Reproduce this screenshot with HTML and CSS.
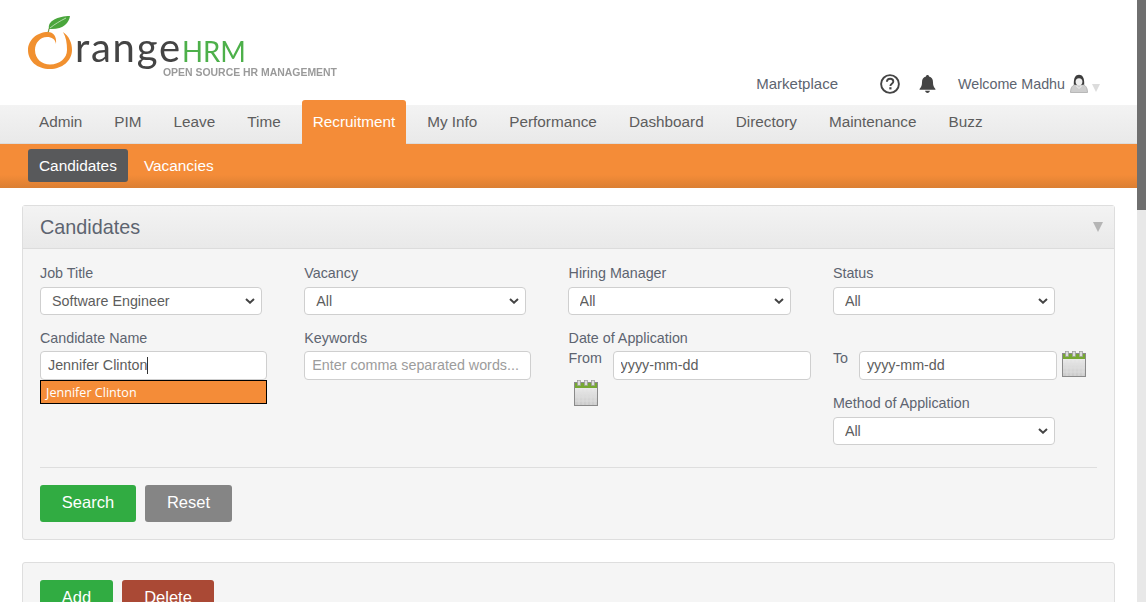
FILE: index.html
```html
<!DOCTYPE html>
<html lang="en">
<head>
<meta charset="utf-8">
<title>OrangeHRM</title>
<link rel="stylesheet" href="styles.css">
</head>
<body>
<div class="page">
  <header class="top">
    <svg class="logo" width="320" height="70" viewBox="0 0 320 70" aria-label="OrangeHRM">
      <path d="M21 14 C19 6 30 1 42 1 C41 8 35 15 21 14Z" fill="#4aa63c"/>
      <path d="M22 13 C27 9 32 6 38 3" stroke="#cfe8c6" stroke-width=".8" fill="none"/>
      <path d="M21 13.500 C21 15 20.500 17 19.500 18" stroke="#6c8a3a" stroke-width="1.100" fill="none"/>
      <path d="M35 17 C41 21 44 28 44 35 C44 46 34 54 22 54 C9 54 0 46 0 35 C0 25 9 17 20 17 C25 17 29 21 28 29 C27 24 24 22 19 22 C12 22 7 28 7 35 C7 44 14 49.500 22 49.500 C32 49.500 39 43 39 35 C39 28 38 22 35 17Z" fill="#f1902f"/>
      <text class="logo-word" x="47" y="47" textLength="105" lengthAdjust="spacing">range</text>
      <text class="logo-hrm" x="154" y="47" textLength="64" lengthAdjust="spacingAndGlyphs">HRM</text>
      <text class="logo-tag" x="135" y="61" textLength="174" lengthAdjust="spacingAndGlyphs">OPEN SOURCE HR MANAGEMENT</text>
    </svg>
    <div class="top-tools">
      <a class="market">Marketplace</a>
      <svg class="help" width="20" height="20" viewBox="0 0 20 20">
        <circle cx="10" cy="10" r="8.900" fill="none" stroke="#444" stroke-width="1.900"/>
        <path d="M6.900 7.700 C7 5.700 8.400 4.800 10.100 4.800 C12 4.800 13.300 5.900 13.300 7.500 C13.300 9.600 10.400 9.900 10.400 12" fill="none" stroke="#444" stroke-width="1.900"/>
        <rect x="9.300" y="13.200" width="2.200" height="2.200" fill="#444"/>
      </svg>
      <svg class="bell" width="17" height="20" viewBox="0 0 18 20">
        <path d="M9 0.500 C10 0.500 10.600 1.200 10.600 2.100 C13.500 2.800 14.800 5 14.800 8 C14.800 11.500 15.500 13.500 17.400 15.200 L17.400 16.200 L0.600 16.200 L0.600 15.200 C2.500 13.500 3.200 11.500 3.200 8 C3.200 5 4.500 2.800 7.400 2.100 C7.400 1.200 8 .5 9 .5Z" fill="#444"/>
        <path d="M6.500 17.200 H11.500 C11.300 18.700 10.300 19.500 9 19.500 C7.700 19.500 6.700 18.700 6.500 17.200Z" fill="#444"/>
      </svg>
      <span class="welcome">Welcome Madhu</span>
      <svg class="avatar" width="18" height="20" viewBox="0 0 18 20">
        <path d="M.5 18.500 C.5 13 3 11 6 10 L12 10 C15 11 17.500 13 17.500 18.500Z" fill="#cdcdcd" stroke="#a4a4a4" stroke-width=".7"/>
        <path d="M3.800 10.500 C3.500 4 5.500 .8 9 .8 C12.500 .8 14.500 4 14.200 10.500 L11.500 11 L6.500 11Z" fill="#3d3d3d"/>
        <ellipse cx="9" cy="7.800" rx="3.400" ry="3.600" fill="#efefef"/>
        <path d="M6.500 12 L9 14.500 L11.500 12" stroke="#f4f4f4" stroke-width="1" fill="none"/>
      </svg>
      <span class="caret-down top-caret"></span>
    </div>
  </header>

  <nav class="main-nav">
    <a class="nav-item">Admin</a>
    <a class="nav-item">PIM</a>
    <a class="nav-item">Leave</a>
    <a class="nav-item">Time</a>
    <a class="nav-item active">Recruitment</a>
    <a class="nav-item">My Info</a>
    <a class="nav-item">Performance</a>
    <a class="nav-item">Dashboard</a>
    <a class="nav-item">Directory</a>
    <a class="nav-item">Maintenance</a>
    <a class="nav-item">Buzz</a>
  </nav>
  <nav class="sub-nav">
    <a class="sub-item current">Candidates</a>
    <a class="sub-item">Vacancies</a>
  </nav>

  <main class="content">
    <section class="panel">
      <div class="panel-head">
        <h1>Candidates</h1>
        <span class="caret-down head-caret"></span>
      </div>
      <form class="panel-body">
        <div class="grid row-one">
          <div class="field">
            <label>Job Title</label>
            <select class="sel"><option>Software Engineer</option></select>
          </div>
          <div class="field">
            <label>Vacancy</label>
            <select class="sel"><option>All</option></select>
          </div>
          <div class="field">
            <label>Hiring Manager</label>
            <select class="sel nudge"><option>All</option></select>
          </div>
          <div class="field">
            <label>Status</label>
            <select class="sel"><option>All</option></select>
          </div>
        </div>
        <div class="grid row-two">
          <div class="field">
            <label class="low">Candidate Name</label>
            <div class="name-wrap">
              <input class="txt" value="Jennifer Clinton">
              <span class="text-caret"></span>
              <div class="suggest">Jennifer Clinton</div>
            </div>
          </div>
          <div class="field">
            <label class="low">Keywords</label>
            <input class="txt" placeholder="Enter comma separated words...">
          </div>
          <div class="field">
            <label class="low">Date of Application</label>
            <div class="date-row wrap">
              <span class="mini">From</span>
              <input class="txt date" value="yyyy-mm-dd">
              <svg class="cal" width="24" height="26" viewBox="0 0 24 26"><use href="#cal"/></svg>
            </div>
          </div>
          <div class="field to-col">
            <div class="date-row">
              <span class="mini to">To</span>
              <input class="txt date" value="yyyy-mm-dd">
              <svg class="cal" width="24" height="26" viewBox="0 0 24 26"><use href="#cal"/></svg>
            </div>
            <label class="method">Method of Application</label>
            <select class="sel"><option>All</option></select>
          </div>
        </div>
        <hr class="divider">
        <div class="actions">
          <button type="button" class="btn green search">Search</button>
          <button type="button" class="btn grey reset">Reset</button>
        </div>
      </form>
    </section>

    <section class="panel second">
      <div class="actions">
        <button type="button" class="btn green add">Add</button>
        <button type="button" class="btn red delete">Delete</button>
      </div>
    </section>
  </main>
</div>
<div class="scrollbar"><div class="thumb"></div></div>

<svg class="defs" width="0" height="0">
  <defs>
    <linearGradient id="calg" x1="0" y1="0" x2="0" y2="1">
      <stop offset="0" stop-color="#f4f4f4"/>
      <stop offset="1" stop-color="#c9c9c9"/>
    </linearGradient>
    <g id="cal">
      <rect x=".5" y="2.500" width="23" height="23" fill="url(#calg)" stroke="#8a8a8a"/>
      <rect x="1" y="3" width="22" height="5" fill="#76a832"/>
      <path d="M5 9V25M9 9V25M13 9V25M17 9V25M21 9V25M1 13H23M1 17H23M1 21H23" stroke="#e0e0e0" stroke-width=".7"/>
      <rect x="3.500" y="0.500" width="3" height="5" fill="#ddd" stroke="#999" stroke-width=".7"/>
      <rect x="10.500" y="0.500" width="3" height="5" fill="#ddd" stroke="#999" stroke-width=".7"/>
      <rect x="17.500" y="0.500" width="3" height="5" fill="#ddd" stroke="#999" stroke-width=".7"/>
    </g>
  </defs>
</svg>
</body>
</html>
```
FILE: styles.css
```css
* { box-sizing: border-box; }
html, body { margin: 0; height: 602px; overflow: hidden; }
body {
  display: flex;
  width: 1146px;
  background: #fff;
  font-family: "Liberation Sans", Arial, sans-serif;
  font-size: 14.300px;
  color: #5d5d5d;
}
.page { width: 1137px; height: 602px; overflow: hidden; flex: none; }
.scrollbar { width: 9px; background: #e8e8e8; flex: none; }
.thumb { height: 210px; background: #6f6f6f; }
.defs { position: absolute; }

.top { height: 105px; display: flex; justify-content: space-between; position: relative; }
.logo { margin: 15px 0 0 28px; filter: blur(.35px); }
.logo-word { font-family: Lato, sans-serif; font-weight: 400; font-size: 40px; fill: #444; }
.logo-hrm { font-family: Lato, sans-serif; font-weight: 400; font-size: 28px; fill: #4db04a; }
.logo-tag { font-family: "Liberation Sans", sans-serif; font-weight: 700; font-size: 11px; fill: #9a9a9a; }
.top-tools { display: flex; align-items: center; height: 20px; margin-top: 74px; }
.market { margin: -2px 42px 0 0; font-size: 15px; color: #5d6470; }
.help { margin-right: 19px; }
.bell { margin-right: 22px; }
.welcome { color: #5d6470; margin-right: 5px; }
.avatar { margin-right: 4px; }
.caret-down { width: 0; height: 0; display: block; border-style: solid; border-color: #dcdcdc transparent transparent; }
.top-caret { border-width: 8px 4.500px 0; margin: 7px 37px 0 0; }

.main-nav {
  height: 39px;
  padding-left: 28px;
  display: flex;
  gap: 10px;
  background: linear-gradient(#f3f3f3, #e9e9e9);
  border-bottom: 1px solid #dcdcdc;
}
.nav-item { padding: 0 11px; font-size: 15.300px; line-height: 34px; color: #5d5d5d; white-space: nowrap; }
.nav-item.active {
  height: 44px;
  margin-top: -5px;
  line-height: 44px;
  background: #f48c38;
  color: #fff;
  border-radius: 3px 3px 0 0;
}
.sub-nav {
  height: 44px;
  padding: 5px 0 0 28px;
  display: flex;
  gap: 5px;
  background: linear-gradient(#f48c38 70%, #db7f33);
}
.sub-item { height: 33px; padding: 0 11px; line-height: 33px; font-size: 15.400px; color: #fff; border-radius: 3px; }
.sub-item.current { background: #58595b; }

.content { padding: 17px 22px 0; }
.panel { background: #f5f5f5; border: 1px solid #dedede; border-radius: 3px; }
.panel-head {
  height: 43px;
  padding: 0 17px;
  display: flex;
  align-items: center;
  justify-content: space-between;
  background: linear-gradient(#f3f3f3, #e9e9e9);
  border-bottom: 1px solid #dcdcdc;
}
.panel-head h1 { margin: 0; font-size: 19.800px; font-weight: 400; color: #5d6470; }
.head-caret { border-width: 10px 5px 0; margin: 0 -6px 0 0; border-top-color: #b5b5b5; }
.panel-body { padding: 16px 17px 17px; }
.grid { display: grid; grid-template-columns: repeat(4, 264.300px); }
.row-one { height: 64px; }
.row-two { height: 138px; }
.field { position: relative; }
label { display: block; height: 16px; margin-bottom: 6px; line-height: 16px; font-size: 14.300px; color: #5d6470; white-space: nowrap; }
label.low { margin: 1px 0 5px; }
.sel {
  display: block;
  width: 222px;
  height: 28px;
  padding: 0 20px 0 11px;
  appearance: none;
  background: #fff url("data:image/svg+xml,%3Csvg xmlns='http://www.w3.org/2000/svg' width='10' height='6'%3E%3Cpath d='M1 1l4 3.700L9 1' fill='none' stroke='%23444' stroke-width='2'/%3E%3C/svg%3E") no-repeat right 6px center;
  border: 1px solid #cfcfcf;
  border-radius: 4px;
  font: 14.300px "Liberation Sans", Arial, sans-serif;
  color: #5d5d5d;
}
.nudge { margin-left: -1px; width: 223px; }
.txt {
  display: block;
  width: 227px;
  height: 29px;
  padding: 0 7px 2px;
  background: #fff;
  border: 1px solid #cfcfcf;
  border-radius: 4px;
  font: 14.300px "Liberation Sans", Arial, sans-serif;
  color: #5d5d5d;
  outline: none;
}
.txt::placeholder { color: #9c9c9c; opacity: 1; }
.name-wrap { position: relative; }
.text-caret { position: absolute; left: 107px; top: 6px; width: 1px; height: 17px; background: #333; }
.suggest {
  position: absolute;
  left: 0;
  top: 29px;
  width: 227px;
  height: 24px;
  padding-left: 5px;
  background: #f48c38;
  border: 1px solid #000;
  font: 12.600px/23px "Open Sans", sans-serif;
  color: #fff;
}
.date-row { display: flex; align-items: flex-start; }
.wrap { flex-wrap: wrap; width: 250px; margin-top: -1px; }
.wrap .date { margin-top: 1px; }
.mini { width: 44px; line-height: 16px; color: #5d6470; font-size: 14.300px; }
.to { width: 26px; padding-top: 21px; }
.date { width: 198px; }
.wrap .date { margin-right: 5px; }
.wrap .cal { margin: 0 0 0 5px; }
.to-col .date { margin-top: 22px; }
.to-col .cal { margin: 22px 0 0 5px; }
label.method { margin: 15px 0 6px; }
.divider { margin: 0 0 17px; height: 1px; border: 0; background: #dedede; }
.actions { display: flex; gap: 9px; }
.btn { height: 37px; border: 0; border-radius: 3px; font: 16.500px "Liberation Sans", Arial, sans-serif; color: #fff; padding: 0 0 2px; }
.green { background: #31ac42; }
.grey { background: #858585; }
.red { background: #aa4935; }
.search { width: 96px; }
.reset { width: 87px; }
.add { width: 73px; }
.delete { width: 92px; }
.second { margin-top: 22px; padding: 17px; }
```
